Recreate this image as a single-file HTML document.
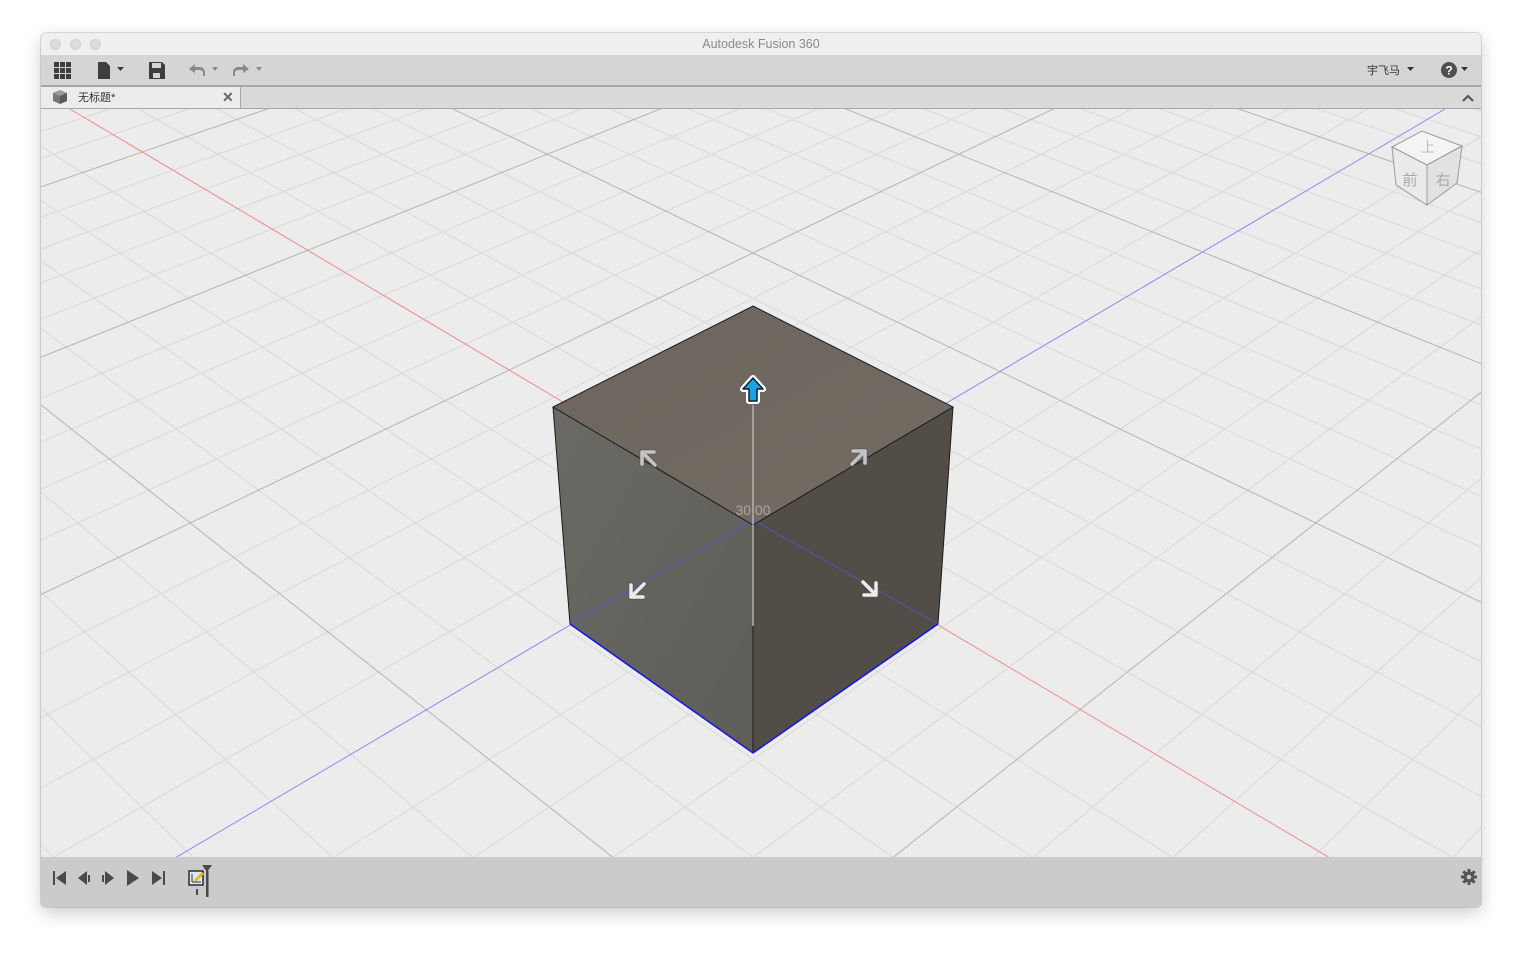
<!DOCTYPE html>
<html><head><meta charset="utf-8">
<style>
html,body{margin:0;padding:0;background:#fff;width:1523px;height:957px;overflow:hidden;font-family:"Liberation Sans","Noto Sans CJK SC",sans-serif}
#win{position:absolute;left:41px;top:33px;width:1440px;height:874px;border-radius:5px;overflow:hidden;box-shadow:0 6px 18px rgba(0,0,0,.2),0 0 0 1px rgba(0,0,0,.12);background:#ececec}
#title{position:absolute;left:0;top:0;width:1440px;height:22px;background:#efefef;text-align:center;font-size:12.5px;line-height:23px;color:#8a8a8a}
.tl{position:absolute;top:6px;width:11px;height:11px;border-radius:50%;background:#dcdcdc;border:1px solid #d0d0d0;box-sizing:border-box}
#tool{position:absolute;left:0;top:22px;width:1440px;height:30px;background:#d5d5d5;border-bottom:2px solid #a6a6a6}
#tabs{position:absolute;left:0;top:54px;width:1440px;height:21px;background:#dadada;border-bottom:1px solid #a8a8a8}
#tab{position:absolute;left:0;top:0;width:199px;height:21px;background:#ececec;border-right:1px solid #a8a8a8;font-size:11px;line-height:22px;color:#333}
#vp{position:absolute;left:0;top:76px;width:1440px;height:748px;overflow:hidden}
#vp svg{display:block}
#bot{position:absolute;left:0;top:824px;width:1440px;height:50px;background:#cbcbcb}
</style></head><body>
<div id="win">
 <div id="title"><div class="tl" style="left:9px"></div><div class="tl" style="left:29px"></div><div class="tl" style="left:49px"></div>Autodesk Fusion 360</div>
 <div id="tool">
  <svg width="1440" height="30" style="position:absolute;left:0;top:0">
   <g fill="#3e3e3e">
    <rect x="13" y="7" width="5" height="5"/><rect x="19" y="7" width="5" height="5"/><rect x="25" y="7" width="5" height="5"/>
    <rect x="13" y="13" width="5" height="5"/><rect x="19" y="13" width="5" height="5"/><rect x="25" y="13" width="5" height="5"/>
    <rect x="13" y="19" width="5" height="5"/><rect x="19" y="19" width="5" height="5"/><rect x="25" y="19" width="5" height="5"/>
    <path d="M57 7h8l4 4v13h-12z"/><path d="M76 12h7l-3.5 4z"/>
    <path d="M108 7h13l3 3v14h-16z"/>
   </g>
   <rect x="111" y="8" width="9" height="5" fill="#d5d5d5"/><rect x="112" y="18" width="7" height="5" fill="#d5d5d5"/>
   <g fill="#8a8a8a">
    <path d="M148 14l6-5v3h5a5 5 0 0 1 5 5v4h-2v-3a3 3 0 0 0-3-3h-5v3z"/><path d="M171 12h6l-3 4z"/>
    <path d="M208 14l-6-5v3h-5a5 5 0 0 0-5 5v4h2v-3a3 3 0 0 1 3-3h5v3z"/><path d="M215 12h6l-3 4z"/>
   </g>
   <text x="1326" y="19" font-size="11" fill="#333" font-family="Noto Sans CJK SC,sans-serif">宇飞马</text>
   <path d="M1366 12h7l-3.5 4z" fill="#333"/>
   <circle cx="1408" cy="15" r="8" fill="#505050"/><text x="1408" y="19.5" font-size="12" font-weight="bold" fill="#fff" text-anchor="middle">?</text>
   <path d="M1420 12h7l-3.5 4z" fill="#333"/>
  </svg>
 </div>
 <div id="tabs">
  <div id="tab"><svg width="18" height="16" style="position:absolute;left:10px;top:2px"><path d="M2 4l7-3 7 3v8l-7 3-7-3z" fill="#777"/><path d="M2 4l7 3 7-3-7-3z" fill="#9a9a9a"/><path d="M9 7v8l7-3V4z" fill="#5a5a5a"/></svg><span style="position:absolute;left:37px;top:0">无标题*</span><span style="position:absolute;left:181px;top:-1px;font-size:14px;color:#666;font-weight:bold">✕</span></div>
  <svg width="14" height="10" style="position:absolute;left:1420px;top:6px"><path d="M2 8l5-5 5 5" stroke="#555" stroke-width="2.2" fill="none"/></svg>
 </div>
 <div id="vp"><svg id="g" width="1440" height="748" viewBox="41 108 1440 748"></svg></div>
 <div id="bot">
  <svg width="300" height="50">
   <g fill="#4a4a4a">
    <rect x="12" y="14" width="2" height="14"/><path d="M25 14v14l-10-7z"/>
    <path d="M46 14v14l-9-7z"/><rect x="47" y="18" width="2" height="7"/>
    <rect x="61" y="18" width="2" height="7"/><path d="M64 14v14l9-7z"/>
    <path d="M86 13v16l12-8z"/>
    <path d="M111 14v14l10-7z"/><rect x="122" y="14" width="2" height="14"/>
   </g>
   <rect x="148" y="14" width="14" height="14" fill="#dde8f5" stroke="#111" stroke-width="1.3"/>
   <path d="M151 25h9M151 25v-8" stroke="#333" stroke-width="1"/>
   <path d="M153 23l8-8 2 2-8 8z" fill="#f2b21c"/>
   <rect x="155" y="32" width="2" height="6" fill="#4a4a4a"/>
   <rect x="165" y="14" width="2.5" height="26" fill="#4a4a4a"/><path d="M161 8h10l-5 7z" fill="#4a4a4a"/>
  </svg>
  <svg width="18" height="18" style="position:absolute;left:1419px;top:11px"><g fill="#555"><circle cx="9" cy="9" r="5.5"/><g stroke="#555" stroke-width="3"><path d="M9 1v16M1 9h16M3.3 3.3l11.4 11.4M14.7 3.3L3.3 14.7"/></g></g><circle cx="9" cy="9" r="2.3" fill="#cbcbcb"/></svg>
 </div>
</div>
<script>
(function(){
var svg=document.getElementById('g');
var O=[753,522],Vr=[-1544,-850],Vb=[3050,-850],c=0.1225;
function P(u,v){var w=1+c*(u+v);return[(O[0]+c*u*Vr[0]+c*v*Vb[0])/w,(O[1]+c*u*Vr[1]+c*v*Vb[1])/w];}
var h='<rect x="41" y="108" width="1440" height="748" fill="#ececec"/>';
var minor='',major='';
for(var i=-60;i<=100;i++){
 var u=i/5;var lo=Math.max(-20,-8.0-u),hi=20;if(lo>=hi)continue;
 var a=P(u,lo),b=P(u,hi),a2=P(lo,u),b2=P(hi,u);
 var s='M'+a[0].toFixed(1)+' '+a[1].toFixed(1)+'L'+b[0].toFixed(1)+' '+b[1].toFixed(1)+'M'+a2[0].toFixed(1)+' '+a2[1].toFixed(1)+'L'+b2[0].toFixed(1)+' '+b2[1].toFixed(1);
 if(i==0)continue;
 if(i%5==0)major+=s;else minor+=s;
}
h+='<path d="'+minor+'" stroke="#d9d9d9" stroke-width="1" fill="none"/>';
h+='<path d="'+major+'" stroke="#b4b4b4" stroke-width="1" fill="none"/>';
h+='<path d="M70 108L1330 857" stroke="#f08a8a" stroke-width="1"/>';
h+='<path d="M1445 108L175 857" stroke="#8c8cf0" stroke-width="1"/>';
h+='<defs><linearGradient id="tp" x1="0" y1="0" x2="1" y2="1"><stop offset="0" stop-color="#6b655d"/><stop offset="1" stop-color="#726c63"/></linearGradient><linearGradient id="lf" x1="0" y1="0" x2="1" y2="1"><stop offset="0" stop-color="#6a6964"/><stop offset="1" stop-color="#5f5d58"/></linearGradient></defs>';
h+='<path d="M553 406L753 524L753 752L570 623Z" fill="url(#lf)"/>';
h+='<path d="M953 406L753 524L753 752L938 623Z" fill="#524d46"/>';
h+='<path d="M753 305L953 406L753 524L553 406Z" fill="url(#tp)"/>';
h+='<path d="M570 623L753 519L938 623" stroke="#5555dd" stroke-width="1" fill="none" opacity=".8"/>';
h+='<path d="M753 305L953 406L753 524L553 406Z M753 524V752 M553 406L570 623 M953 406L938 623" stroke="#1a1a1a" stroke-width="1" fill="none"/>';
h+='<path d="M570 623L753 752L938 623" stroke="#1515ee" stroke-width="1.5" fill="none"/>';
h+='<path d="M753 404V625" stroke="#d8d8d8" stroke-width="1"/>';
h+='<text x="753" y="514" font-size="14" fill="#a9a6a0" text-anchor="middle" font-family="Liberation Sans,sans-serif">30.00</text>';
var ar='M0 -12L10 -1H4V11H-4V-1H-10Z';
h+='<path transform="translate(753 389)" d="'+ar+'" fill="#1aa3e0" stroke="#fff" stroke-width="6" paint-order="stroke" stroke-linejoin="round"/>';
h+='<path transform="translate(753 389)" d="'+ar+'" fill="#1aa3e0" stroke="#0a2030" stroke-width="1.5" stroke-linejoin="round"/>';
function g(x,y,r,col){var d='M-6 -6H6V6M6 -6L-7 7';return '<g transform="translate('+x+' '+y+') rotate('+r+')"><path d="'+d+'" stroke="#555" stroke-width="6" fill="none" stroke-linecap="round" stroke-linejoin="round" opacity=".5"/><path d="'+d+'" stroke="'+col+'" stroke-width="3.5" fill="none" stroke-linecap="round" stroke-linejoin="round"/></g>';}
h+=g(648,457,-90,'#c4c4c4')+g(859,456,0,'#c4c4c4')+g(637,590,180,'#ececec')+g(870,588,90,'#ececec');
h+='<g stroke="#9a9a9a" stroke-width="1" fill="#f4f4f4"><path d="M1392 146L1422 130L1462 145L1427 164Z"/><path d="M1392 146L1427 164L1427 204L1396 184Z" fill="#eaeaea"/><path d="M1462 145L1427 164L1427 204L1457 182Z" fill="#e2e2e2"/></g>';
h+='<text x="1428" y="151" font-size="14" fill="#bbb" text-anchor="middle" font-family="Noto Sans CJK SC,sans-serif">上</text>';
h+='<text x="1410" y="184" font-size="15" fill="#aaa" text-anchor="middle" font-family="Noto Sans CJK SC,sans-serif">前</text>';
h+='<text x="1443" y="184" font-size="15" fill="#aaa" text-anchor="middle" font-family="Noto Sans CJK SC,sans-serif">右</text>';
svg.innerHTML=h;
})();
</script>
</body></html>
